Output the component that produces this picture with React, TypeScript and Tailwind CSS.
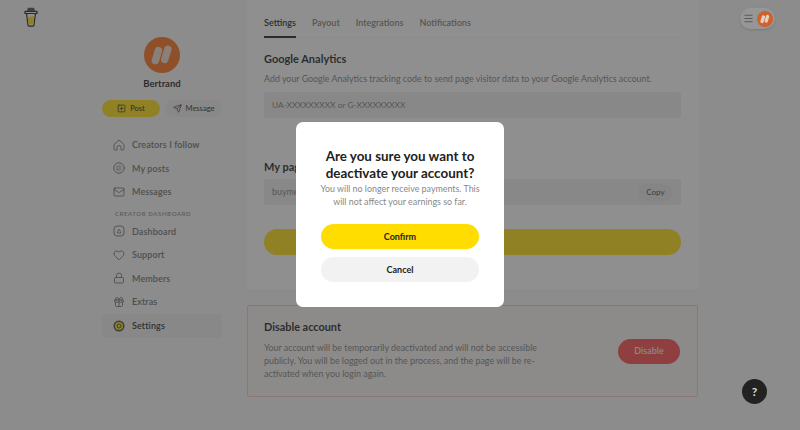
import { Gift, Heart, Lock, Mail, Menu, Send, SquarePlus } from "lucide-react";
import type { ReactNode } from "react";

const Home = () => (
  <svg width="12" height="12" viewBox="0 0 24 24" fill="none" stroke="currentColor" strokeWidth="1.8" strokeLinejoin="round">
    <path d="M2 11 12 2l10 9v9a2 2 0 0 1-2 2h-4v-5a4 4 0 0 0-8 0v5H4a2 2 0 0 1-2-2z" />
  </svg>
);

const Posts = () => (
  <svg width="12" height="12" viewBox="0 0 24 24" fill="none" stroke="currentColor" strokeWidth="1.8" strokeLinecap="round">
    <circle cx="12" cy="12" r="10.5" />
    <path d="M8 8v8h8M11 8h5M12 12h4" strokeWidth="1.5" />
  </svg>
);

const Dash = () => (
  <svg width="12" height="12" viewBox="0 0 24 24" fill="none" stroke="currentColor" strokeWidth="1.8" strokeLinejoin="round">
    <rect x="2" y="2" width="20" height="20" rx="6" />
    <path d="m8 16 4-8 4 8z" strokeWidth="1.5" />
  </svg>
);

const Gear = () => (
  <svg width="12" height="12" viewBox="0 0 24 24">
    <circle cx="12" cy="12" r="11" fill="#3c3c3c" />
    <circle cx="12" cy="12" r="8" fill="#ffdd00" />
    <circle cx="12" cy="12" r="4" fill="none" stroke="#3c3c3c" strokeWidth="2" />
  </svg>
);

const Cup = () => (
  <svg width="14" height="20" viewBox="0 0 14 20" fill="none">
    <path d="M2.6 6.5 4 18.2c.1.6.5.9 1 .9h4c.5 0 .9-.3 1-.9l1.4-11.7z" fill="#fff" stroke="#111" strokeWidth="1.2" />
    <path d="M3.7 10 4.6 17.6h4.8L10.3 9.2z" fill="#ffdd00" />
    <path d="M1 4.3h12v2.2H1z" fill="#fff" stroke="#111" strokeWidth="1.2" strokeLinejoin="round" />
    <path d="M3 4.2 3.6 1.6C3.7 1 4.2 .8 4.6 .8h4.8c.4 0 .9.2 1 .8l.6 2.6z" fill="#444" />
  </svg>
);

const Avatar = ({ size, bg, mark }: { size: number; bg: string; mark: string }) => (
  <svg width={size} height={size} viewBox="0 0 36 36">
    <circle cx="18" cy="18" r="18" fill={bg} />
    <rect x="9.2" y="9.5" width="7.4" height="18" rx="3.7" fill={mark} transform="rotate(17 12.9 18.5)" />
    <rect x="18.6" y="8.4" width="7.4" height="18" rx="3.7" fill={mark} transform="rotate(17 22.3 17.4)" />
  </svg>
);

const topItems: [string, ReactNode][] = [
  ["Creators I follow", <Home />],
  ["My posts", <Posts />],
  ["Messages", <Mail size={12} strokeWidth={1.8} />],
];

const dashItems: [string, ReactNode][] = [
  ["Dashboard", <Dash />],
  ["Support", <Heart size={12} strokeWidth={1.8} />],
  ["Members", <Lock size={12} strokeWidth={1.8} />],
  ["Extras", <Gift size={12} strokeWidth={1.8} />],
];

function NavItem({ label, icon }: { label: string; icon: ReactNode }) {
  return (
    <div className="flex h-[23.5px] items-center gap-[7px] pl-[11px] text-[9px] font-semibold tracking-[0.1px] text-[#666]">
      <span className="flex w-3 justify-center text-[#666]">{icon}</span>
      {label}
    </div>
  );
}

export default function App() {
  return (
    <div className="relative flex h-[430px] w-[800px] overflow-hidden bg-[#f7f7f7] font-['Lato','Noto_Sans',sans-serif] text-[#111]">
      <aside className="w-[247px] shrink-0 pl-[102px] pr-[25px] pt-[37px]">
        <div className="absolute left-[24px] top-[7px]">
          <Cup />
        </div>
        <div className="flex justify-center">
          <Avatar size={36} bg="#ff660e" mark="#f3d9cb" />
        </div>
        <p className="mt-[2px] h-[18px] text-center text-[9.5px] font-bold leading-[18px]">Bertrand</p>
        <div className="mt-[7px] flex justify-between">
          <button className="flex h-[17px] w-[58px] items-center justify-center gap-[4px] rounded-full bg-[#ffdd00] text-[7.5px] font-medium text-[#222]">
            <SquarePlus size={9} /> Post
          </button>
          <button className="flex h-[17px] w-[57px] items-center justify-center gap-[4px] rounded-full bg-[#eeeeee] text-[7.5px] font-medium text-[#333]">
            <Send size={9} /> Message
          </button>
        </div>
        <nav className="mt-[16px]">
          {topItems.map(([label, icon]) => (
            <NavItem key={label} label={label} icon={icon} />
          ))}
          <p className="mb-[1px] mt-[5px] h-[10px] pl-[13px] text-[6px] font-semibold uppercase leading-[10px] tracking-[0.6px] text-[#888]">
            Creator dashboard
          </p>
          {dashItems.map(([label, icon]) => (
            <NavItem key={label} label={label} icon={icon} />
          ))}
          <div className="flex h-6 items-center gap-[7px] rounded-[3px] bg-[#eeeeee] pl-[11px] text-[9px] font-semibold tracking-[0.1px] text-[#222]">
            <Gear />
            Settings
          </div>
        </nav>
      </aside>

      <main className="w-[451px] shrink-0">
        <section className="h-[289px] bg-white px-[17px]">
          <div className="flex h-[38px] gap-[16px] border-b border-[#f5f5f5] pt-[16px] text-[9px] font-semibold leading-[14px] text-[#777]">
            <span className="h-[22px] border-b-2 border-[#111] text-[#111]">Settings</span>
            <span>Payout</span>
            <span>Integrations</span>
            <span>Notifications</span>
          </div>
          <h2 className="mt-[12px] h-[17px] text-[11px] font-bold leading-[17px]">Google Analytics</h2>
          <p className="mt-[4px] h-[16px] text-[8.9px] leading-[16px] text-[#777]">
            Add your Google Analytics tracking code to send page visitor data to your Google Analytics account.
          </p>
          <div className="mt-[5px] flex h-[26px] items-center rounded-[2px] bg-[#eeeeee] px-[8px] text-[8.4px] text-[#777]">
            UA-XXXXXXXXX or G-XXXXXXXXX
          </div>
          <h2 className="mt-[40px] h-[17px] text-[11px] font-bold leading-[17px]">My page</h2>
          <div className="mt-[4px] flex h-[26px] items-center justify-between rounded-[2px] bg-[#eeeeee] px-[8px] text-[8.9px] text-[#777]">
            buyme.co
            <span className="flex h-[17px] w-[35px] items-center justify-center rounded-full bg-[#e8e8e8] text-[8px] font-semibold text-[#555]">Copy</span>
          </div>
          <div className="mt-[24px] h-[26px] rounded-full bg-[#ffdd00]" />
        </section>

        <section className="mt-[16px] flex h-[92px] items-center justify-between rounded-[2px] border border-[#ffc0c0] bg-[#f7f5f3] pl-[16px] pr-[17px]">
          <div className="w-[278px] pb-[3px]">
            <h2 className="h-[16px] text-[10.9px] font-bold leading-[16px]">Disable account</h2>
            <p className="mt-[5.5px] text-[8.9px] leading-[13px] text-[#777]">
              Your account will be temporarily deactivated and will not be accessible publicly. You will be logged out in the process, and the page will be re-activated when you login again.
            </p>
          </div>
          <button className="flex h-[25px] w-[62px] items-center justify-center rounded-full bg-[#ff4040] text-[9px] font-semibold text-[#eee]">
            Disable
          </button>
        </section>
      </main>

      <div className="absolute inset-0 flex items-center justify-center bg-[rgba(62,62,62,0.58)]">
        <div className="mb-[1px] flex h-[185px] w-[208px] flex-col items-center rounded-[7px] bg-white px-[25px] pt-[26px]">
          <h1 className="whitespace-nowrap text-center text-[13.4px] font-bold leading-[17px] text-[#222]">
            Are you sure you want to
            <br />
            deactivate your account?
          </h1>
          <p className="whitespace-nowrap text-center text-[8.9px] leading-[13px] text-[#888]">
            You will no longer receive payments. This
            <br />
            will not affect your earnings so far.
          </p>
          <button className="mt-[16px] flex h-[25px] w-full shrink-0 items-center justify-center rounded-full bg-[#ffdd00] text-[9px] font-bold text-[#222]">
            Confirm
          </button>
          <button className="mt-[8px] flex h-[25px] w-full shrink-0 items-center justify-center rounded-full bg-[#f2f2f2] text-[9px] font-bold text-[#222]">
            Cancel
          </button>
        </div>
      </div>

      <div className="absolute left-[740px] top-[8px] flex h-[21px] w-[35px] items-center justify-between rounded-full bg-[#969696] pl-[3px] pr-[2px] shadow-sm">
        <Menu size={11} className="text-[#555]" />
        <Avatar size={16} bg="#cd622c" mark="#e6cfc0" />
      </div>
      <div className="absolute left-[742px] top-[379px] flex h-[25px] w-[25px] items-center justify-center rounded-full bg-[#222] text-[12px] font-bold text-[#ddd]">
        ?
      </div>
    </div>
  );
}
